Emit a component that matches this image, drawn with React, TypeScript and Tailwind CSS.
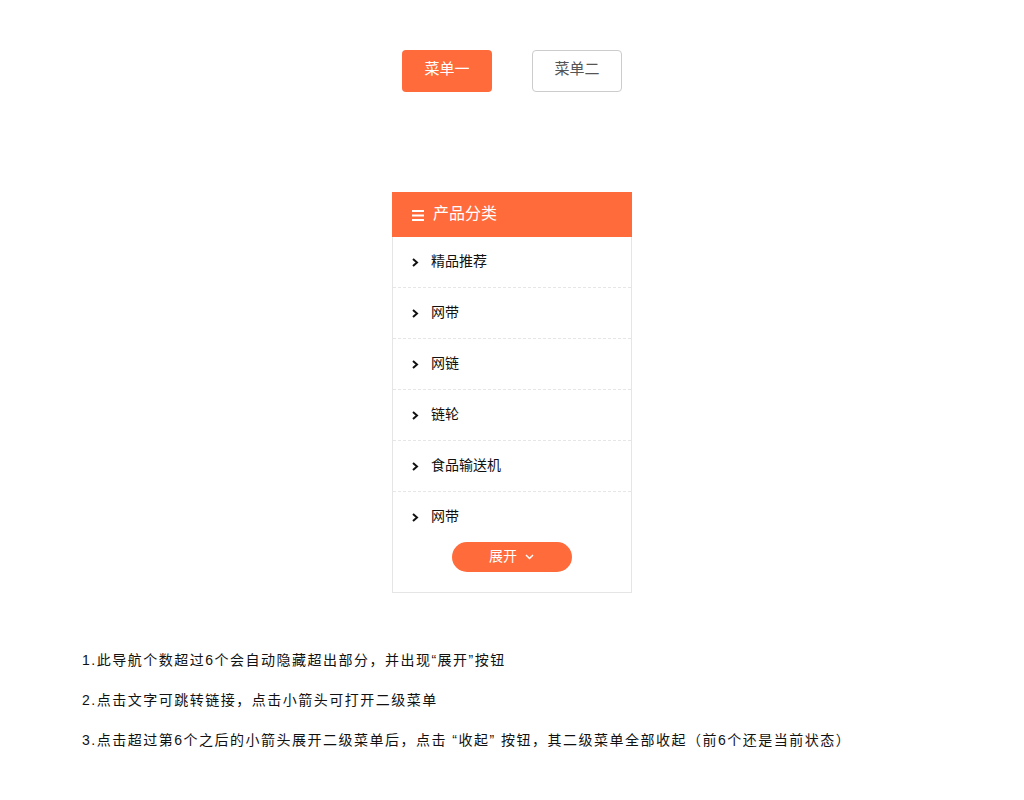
import React from "react";

const items = ["精品推荐", "网带", "网链", "链轮", "食品输送机", "网带"];

function Chevron() {
  return (
    <svg width="7" height="9" viewBox="0 0 7 9" className="shrink-0 mt-[1px]">
      <path d="M1 1 L5 4.5 L1 8" fill="none" stroke="#111" strokeWidth="2" />
    </svg>
  );
}

export default function App() {
  return (
    <div
      className="w-[1024px] h-[800px] bg-white relative"
      style={{ fontFamily: '"Liberation Sans", "Noto Sans CJK SC", sans-serif' }}
    >
      <div className="flex justify-center gap-10 pt-[50px]">
        <div className="w-[90px] h-[42px] rounded-[4px] bg-[#ff6b3b] text-white text-[15px] flex items-center justify-center pb-[4px]">
          菜单一
        </div>
        <div className="w-[90px] h-[42px] rounded-[4px] border border-[#cccccc] text-[#555] text-[15px] flex items-center justify-center pb-[4px]">
          菜单二
        </div>
      </div>

      <div className="mt-[100px] ml-[392px] w-[240px] border border-[#e5e5e5] border-t-0">
        <div className="h-[45px] bg-[#ff6b3b] -mx-px flex items-center pl-[20px] gap-[9px] text-white text-[16px]">
          <svg width="12" height="11" viewBox="0 0 12 11" className="mt-[1px]">
            <rect x="0" y="0" width="12" height="2" fill="#fff" />
            <rect x="0" y="4.5" width="12" height="2" fill="#fff" />
            <rect x="0" y="9" width="12" height="2" fill="#fff" />
          </svg>
          <span className="pb-[2px]">产品分类</span>
        </div>
        {items.map((t, i) => (
          <div
            key={i}
            className={
              i < items.length - 1
                ? "h-[51px] flex items-center pl-[19px] gap-[12px] text-[14px] text-[#111] border-b border-dashed border-[#e6e6e6]"
                : "h-[50px] flex items-center pl-[19px] gap-[12px] text-[14px] text-[#111]"
            }
          >
            <Chevron />
            <span className="pb-[2px]">{t}</span>
          </div>
        ))}
        <div className="flex justify-center pb-[20px]">
          <div className="w-[120px] h-[30px] rounded-full bg-[#ff6b3b] text-white text-[14px] flex items-center justify-center gap-[8px] ml-[-1px]">
            <span className="pb-[2px]">展开</span>
            <svg width="9" height="6" viewBox="0 0 9 6">
              <path d="M1 1 L4.5 4.5 L8 1" fill="none" stroke="#fff" strokeWidth="1.5" />
            </svg>
          </div>
        </div>
      </div>

      <div className="mt-[57px] ml-[82px] text-[14px] text-[#111] flex flex-col gap-[20px] leading-[20px] tracking-[1.5px]">
        <p>1.此导航个数超过6个会自动隐藏超出部分，并出现“展开”按钮</p>
        <p>2.点击文字可跳转链接，点击小箭头可打开二级菜单</p>
        <p>3.点击超过第6个之后的小箭头展开二级菜单后，点击 “收起” 按钮，其二级菜单全部收起（前6个还是当前状态）</p>
      </div>
    </div>
  );
}
